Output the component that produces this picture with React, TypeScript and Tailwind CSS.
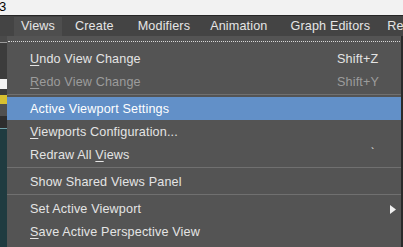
import { ReactNode } from "react";

type Item = {
  label: ReactNode;
  shortcut?: string;
  disabled?: boolean;
  active?: boolean;
  submenu?: boolean;
  mark?: boolean;
};

function U({ children }: { children: string }) {
  return <span className="underline underline-offset-2">{children}</span>;
}

const groups: Item[][] = [
  [
    { label: <><U>U</U>ndo View Change</>, shortcut: "Shift+Z" },
    { label: <><U>R</U>edo View Change</>, shortcut: "Shift+Y", disabled: true },
  ],
  [
    { label: "Active Viewport Settings", active: true },
    { label: <><U>V</U>iewports Configuration...</> },
    { label: <>Redraw All <U>V</U>iews</>, mark: true },
  ],
  [{ label: "Show Shared Views Panel" }],
  [
    { label: "Set Active Viewport", submenu: true },
    { label: <><U>S</U>ave Active Perspective View</> },
  ],
];

// left offsets of the menubar labels after "Views"
const tabs = [
  { t: "Create", ml: "ml-[13px]" },
  { t: "Modifiers", ml: "ml-[24px]" },
  { t: "Animation", ml: "ml-[20px]" },
  { t: "Graph Editors", ml: "ml-[23px]" },
  { t: "Re", ml: "ml-[17px]" },
];

function MenuRow({ item }: { item: Item }) {
  return (
    <div
      className={`relative flex h-[23px] items-center pl-[23px] pt-[2px] ${
        item.active ? "bg-[#6290c8] text-white" : ""
      } ${item.disabled ? "text-[#9c9c9c]" : ""}`}
    >
      <span className="w-[307px] shrink-0 whitespace-nowrap">{item.label}</span>
      {item.shortcut && <span className="whitespace-nowrap">{item.shortcut}</span>}
      {item.mark && (
        <span className="absolute left-[364px] top-[2px] text-[10px] text-white">`</span>
      )}
      {item.submenu && (
        <svg className="absolute left-[383px] top-[8px]" width="6" height="9" viewBox="0 0 6 9">
          <path d="M0 0 L6 4.5 L0 9 Z" fill="#f0f0f0" />
        </svg>
      )}
    </div>
  );
}

export default function App() {
  return (
    <div className="flex h-[247px] w-[403px] flex-col overflow-hidden bg-[#3a3a3a] font-['Liberation_Sans',Arial,sans-serif] text-[12.6px] tracking-[0.15px] text-[#e4e4e4]">
      <div className="h-[15px] shrink-0 bg-[#f2f2f2] text-[13px] leading-[13px] text-black">
        <span className="-ml-[1px]">3</span>
      </div>
      <div className="flex h-[21px] shrink-0 items-center whitespace-nowrap border-t border-[#262626] bg-[#444444] pt-[1px] text-[#e6e6e6]">
        <div className="ml-[14px] flex h-full w-[48px] shrink-0 items-center justify-center bg-[#4e4e4e]">
          Views
        </div>
        {tabs.map(({ t, ml }) => (
          <span key={t} className={`${ml} shrink-0`}>
            {t}
          </span>
        ))}
      </div>
      <div className="flex flex-1">
        <div className="flex w-[7px] shrink-0 flex-col">
          <div className="h-[6px] bg-[#4a4a4a]" />
          <div className="h-[1px] bg-[#9a9a9a]" />
          <div className="h-[36px] bg-[#3c3c3c]" />
          <div className="h-[10px] bg-[#f4f4f4]" />
          <div className="h-[6px] bg-[#3c3c3c]" />
          <div className="h-[9px] bg-[#d8c030]" />
          <div className="h-[12px] bg-[#505050]" />
          <div className="h-[12px] bg-[#2e2e2e]" />
          <div className="flex-1 border-t border-[#6fa0a8] bg-[#1f3b40]" />
        </div>
        <div className="flex w-[394px] shrink-0 flex-col bg-[#545454]">
          <div className="flex h-[11px] items-center px-[1px]">
            <div className="w-full border-t border-dotted border-[#d8d8d8]" />
          </div>
          {groups.map((g, gi) => (
            <div key={gi}>
              {gi > 0 && <div className="mb-[2px] mt-[1px] h-[1px] bg-[#707070]" />}
              {g.map((item, ii) => (
                <MenuRow key={ii} item={item} />
              ))}
            </div>
          ))}
        </div>
        <div className="flex-1 bg-[#2a2a2a]" />
      </div>
    </div>
  );
}
